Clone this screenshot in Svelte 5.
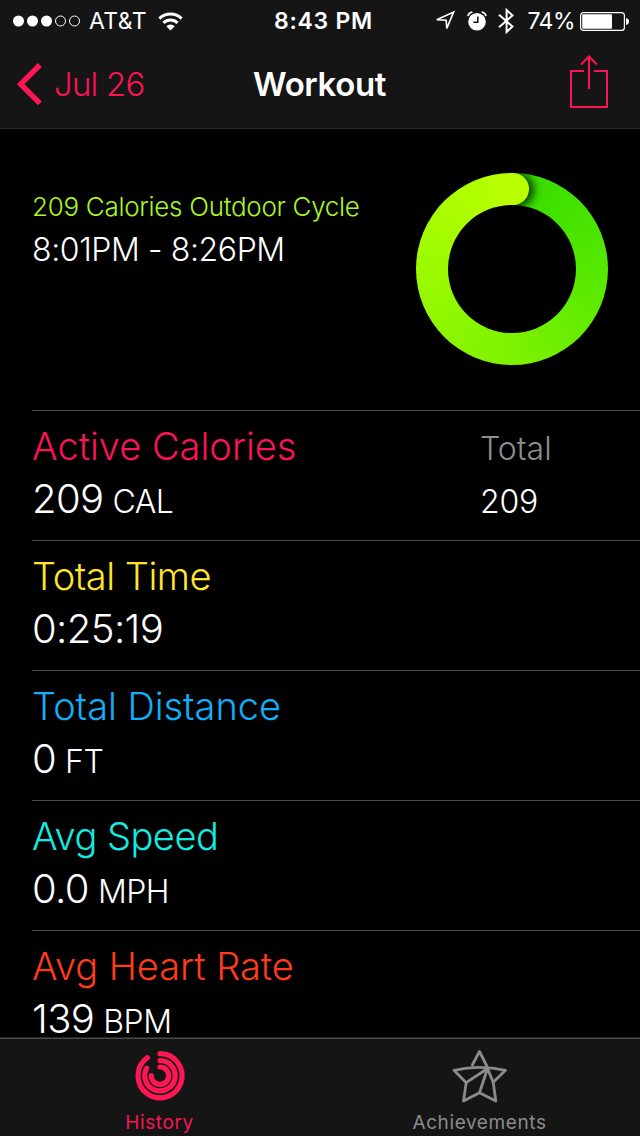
<script>
    let workout = {
        title: '209 Calories Outdoor Cycle',
        time: '8:01PM - 8:26PM'
    };

    let metrics = [
        { name: 'Active Calories', value: '209', unit: 'CAL', color: '#fa1456', spacing: 0, total: '209' },
        { name: 'Total Time', value: '0:25:19', color: '#ffe62b', spacing: -0.5 },
        { name: 'Total Distance', value: '0', unit: 'FT', color: '#0fb0fa', spacing: -0.05 },
        { name: 'Avg Speed', value: '0.0', unit: 'MPH', color: '#13ece2', spacing: -0.5 },
        { name: 'Avg Heart Rate', value: '139', unit: 'BPM', color: '#ff3b1d', spacing: -0.05 }
    ];
</script>

<style>
    :global(body) {
        margin: 0;
        background: #000;
    }
    .screen {
        display: flex;
        flex-direction: column;
        width: 640px;
        height: 1136px;
        overflow: hidden;
        background: #000;
        color: #fff;
        font-family: Inter, Roboto, sans-serif;
        font-weight: 330;
        white-space: nowrap;
    }
    svg {
        display: block;
        flex: none;
        overflow: visible;
    }

    .bars {
        flex: none;
        background: #151515;
        border-bottom: 1px solid #2b2b2b;
    }
    .status {
        display: grid;
        grid-template-columns: 1fr auto 1fr;
        align-items: center;
        height: 41px;
        padding: 0 10px 0 13px;
        font-size: 23px;
        line-height: 41px;
        font-weight: 400;
    }
    .status-left, .status-right {
        display: flex;
        align-items: center;
    }
    .status-right {
        justify-content: flex-end;
    }
    .carrier {
        margin: 0 11px 0 9px;
        letter-spacing: 0.4px;
    }
    .clock {
        margin-left: 4px;
        padding-top: 1px;
        font-weight: 600;
        letter-spacing: 0.7px;
    }
    .carrier, .percent {
        padding-top: 1px;
    }
    .alarm, .bluetooth {
        margin-left: 11px;
    }
    .percent {
        margin: 0 5px 0 13px;
        letter-spacing: -0.5px;
    }

    .nav {
        display: grid;
        grid-template-columns: 1fr auto 1fr;
        align-items: center;
        height: 87px;
        padding: 0 31px 0 17px;
        font-size: 33px;
    }
    .back {
        display: flex;
        align-items: center;
        gap: 12px;
        color: #fa1456;
        letter-spacing: -0.8px;
    }
    .back span {
        padding-bottom: 2px;
    }
    .nav h1 {
        margin: 0 0 0 13px;
        padding-bottom: 2px;
        font-size: 33px;
        font-weight: 600;
        letter-spacing: -0.4px;
    }
    .share {
        justify-self: end;
        padding-bottom: 5px;
    }

    .content {
        flex: 1;
        min-height: 0;
        overflow: hidden;
    }
    .summary {
        display: flex;
        justify-content: space-between;
        height: 281px;
        padding: 0 32px;
        box-sizing: border-box;
    }
    .info {
        padding-top: 61px;
    }
    .activity {
        color: #a9f920;
        font-size: 26px;
        line-height: 33px;
        letter-spacing: -0.3px;
    }
    .time {
        margin-top: 7px;
        font-size: 32px;
        line-height: 40px;
        letter-spacing: -0.4px;
    }

    .ring {
        position: relative;
        width: 192px;
        height: 192px;
        margin-top: 44px;
        border-radius: 50%;
        background: conic-gradient(#34dc00, #55e800 25%, #7df200 50%, #9cfa00 75%, #baff00);
    }
    /* right half only, so the shadow falls on the start of the ring */
    .ring-end {
        position: absolute;
        left: 94px;
        top: 0;
        width: 98px;
        height: 100%;
        overflow: hidden;
        border-radius: 0 96px 96px 0;
    }
    .cap {
        position: absolute;
        left: -14px;
        top: 0;
        width: 33px;
        height: 32px;
        border-radius: 16px;
        background: #baff00;
        box-shadow: 4px 1px 9px 1px rgba(0, 30, 0, 0.85);
    }
    .hole {
        position: absolute;
        left: 32px;
        top: 32px;
        width: 128px;
        height: 128px;
        border-radius: 50%;
        background: #000;
    }

    .metric {
        display: flex;
        height: 129px;
        margin-left: 32px;
        border-top: 1px solid #4c4c4e;
    }
    .main {
        width: 448px;
        padding-top: 12px;
    }
    .name {
        font-size: 38px;
        line-height: 46px;
    }
    .value {
        margin-top: 4px;
        font-size: 40px;
        line-height: 52px;
        letter-spacing: -0.6px;
    }
    .unit {
        margin-left: 9px;
        font-size: 32px;
        letter-spacing: -0.5px;
    }
    .total {
        padding-top: 15px;
        font-size: 32px;
        line-height: 46px;
    }
    .total-name {
        color: #8e8e93;
    }
    .total-value {
        margin-top: 7px;
        letter-spacing: -0.2px;
    }

    .tabs {
        flex: none;
        display: flex;
        height: 98px;
        background: #151515;
        border-top: 1px solid #262626;
        box-shadow: inset 0 1px #4a4a4a;
    }
    .tab {
        display: flex;
        flex-direction: column;
        align-items: center;
        flex: 1;
        padding-top: 12px;
        color: #8b8b8b;
        font-size: 19px;
        line-height: 24px;
        font-weight: 370;
        letter-spacing: 0.6px;
    }
    .tab.active {
        color: #fa1456;
    }
    .tab svg {
        margin-left: -1px;
    }
    .tab span {
        margin: 7px 0 0 -1px;
    }
</style>

<div class="screen">
    <header class="bars">
        <div class="status">
            <div class="status-left">
                <svg width="67" height="12" viewBox="0 0 67 12" fill="#fff">
                    <circle cx="5.5" cy="6" r="5.5" />
                    <circle cx="19.5" cy="6" r="5.5" />
                    <circle cx="33.5" cy="6" r="5.5" />
                    <circle cx="47.5" cy="6" r="5" fill="none" stroke="#fff" />
                    <circle cx="61.5" cy="6" r="5" fill="none" stroke="#fff" />
                </svg>
                <span class="carrier">AT&amp;T</span>
                <svg width="25" height="19" viewBox="0 0 25 19" fill="none" stroke="#fff" stroke-width="3.1">
                    <path d="M1.4 6.6a15.7 15.7 0 0 1 22.2 0" />
                    <path d="M5.4 10.9a10 10 0 0 1 14.2 0" />
                    <path d="M12.5 18.5l-4.2-4.3a6 6 0 0 1 8.4 0z" fill="#fff" stroke="none" />
                </svg>
            </div>
            <div class="clock">8:43 PM</div>
            <div class="status-right">
                <svg width="21" height="20" viewBox="0 0 21 20" fill="none" stroke="#fff" stroke-width="1.6">
                    <path d="M1.8 8.8L18.6 1 11.8 17.4 11.2 9.2z" />
                </svg>
                <svg class="alarm" width="20" height="20" viewBox="0 0 20 20" fill="none" stroke="#fff">
                    <circle cx="10" cy="10.7" r="8.8" fill="#fff" stroke="none" />
                    <path d="M1 5.2A5 5 0 0 1 5.4 1.2M14.6 1.2A5 5 0 0 1 19 5.2" stroke-width="1.7" />
                    <path d="M10.8 5.5v5.8H6.4" stroke="#151515" stroke-width="1.5" />
                </svg>
                <svg class="bluetooth" width="16" height="26" viewBox="0 0 16 26" fill="none" stroke="#fff" stroke-width="2">
                    <path d="M1 6.8L14.5 18.6 8.6 24V2L14.5 7.4 1 19.2" />
                </svg>
                <span class="percent">74%</span>
                <svg width="50" height="19" viewBox="0 0 50 19">
                    <rect x=".6" y=".6" width="43.8" height="17.8" rx="3" fill="none" stroke="#fff" stroke-width="1.2" />
                    <rect x="2.2" y="2.2" width="29.8" height="14.6" rx="1.2" fill="#fff" />
                    <path d="M46 6c4 .6 4 6.4 0 7z" fill="#fff" />
                </svg>
            </div>
        </div>
        <div class="nav">
            <div class="back">
                <svg width="25" height="43" viewBox="0 0 25 43" fill="none" stroke="#ff1654" stroke-width="5.4">
                    <path d="M22.9 2L3.7 21.2 22.9 40.4" />
                </svg>
                <span>Jul 26</span>
            </div>
            <h1>Workout</h1>
            <svg class="share" width="40" height="54" viewBox="0 0 40 54" fill="none" stroke="#fa1456" stroke-width="2">
                <path d="M15 16H2v36h36V16H25" />
                <path d="M20 34V2M12 9.5l8-8 8 8" />
            </svg>
        </div>
    </header>

    <main class="content">
        <section class="summary">
            <div class="info">
                <div class="activity">{workout.title}</div>
                <div class="time">{workout.time}</div>
            </div>
            <div class="ring">
                <div class="ring-end"><div class="cap"></div></div>
                <div class="hole"></div>
            </div>
        </section>
        {#each metrics as metric}
            <section class="metric">
                <div class="main">
                    <div class="name" style="color: {metric.color}; letter-spacing: {metric.spacing}px">{metric.name}</div>
                    <div class="value">{metric.value}{#if metric.unit}<span class="unit">{metric.unit}</span>{/if}</div>
                </div>
                {#if metric.total}
                    <div class="total">
                        <div class="total-name">Total</div>
                        <div class="total-value">{metric.total}</div>
                    </div>
                {/if}
            </section>
        {/each}
    </main>

    <nav class="tabs">
        <div class="tab active">
            <svg width="54" height="54" viewBox="0 0 54 54" fill="none" stroke="#ff1654" stroke-width="5.2" stroke-linecap="round">
                <path d="M27 3.7A22 22 0 1 1 14.4 7.7" />
                <path d="M27 10.5A15.2 15.2 0 1 1 13.7 18.3" />
                <path d="M27 17A8.7 8.7 0 1 1 18.3 25.7" />
            </svg>
            <span>History</span>
        </div>
        <div class="tab">
            <svg width="54" height="54" viewBox="0 0 54 54" fill="none" stroke="#8b8b8b" stroke-width="2.8" stroke-linejoin="round">
                <path d="M18.8 16L26.5 1.5 34.5 17.5M1 20.3L13.2 32.7 10.5 51 26.5 42.7 42.8 51 40.2 32.3 52.5 20.3Q26.5 14.5 1 20.3z" />
                <path d="M13.2 32.7L34.5 18.5 26.5 42.7M34.5 18.5L40.2 32.3" />
            </svg>
            <span>Achievements</span>
        </div>
    </nav>
</div>
